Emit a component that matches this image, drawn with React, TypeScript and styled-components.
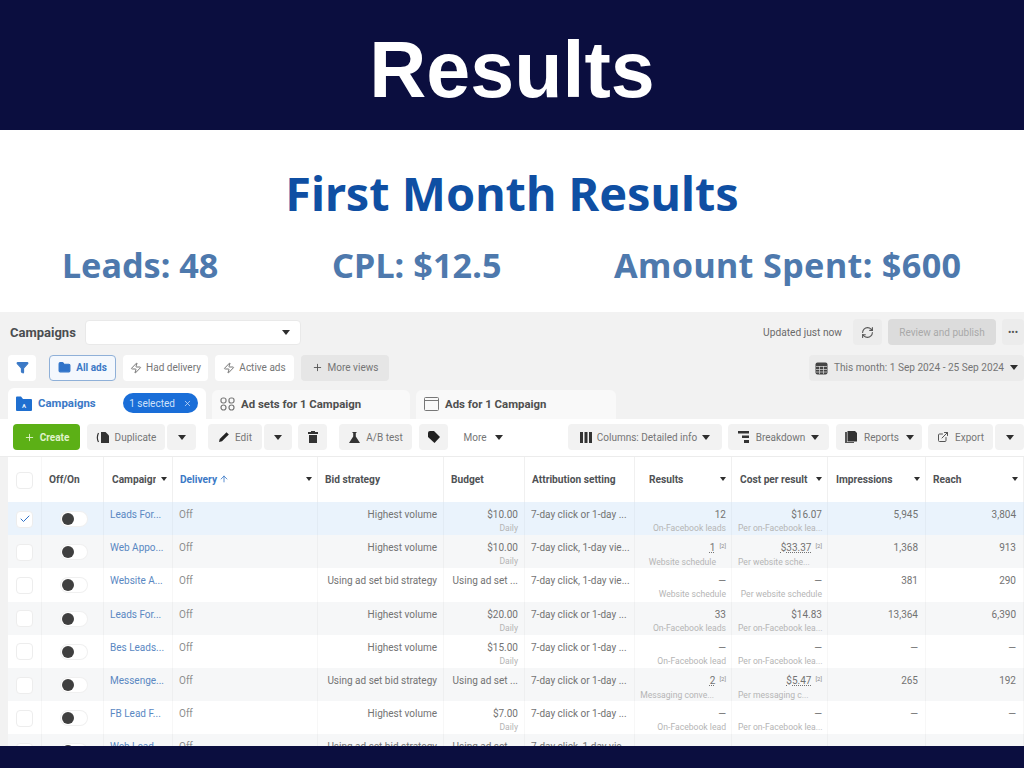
import React from "react";
import styled, { createGlobalStyle } from "styled-components";
import { Filter, Folder, Zap, Plus, X, ExternalLink, Check, ArrowUp, RefreshCw } from "lucide-react";

const Global = createGlobalStyle`
  html, body { margin: 0; padding: 0; background: #fff; }
  body { width: 1024px; height: 768px; overflow: hidden; font-family: "Roboto", "Liberation Sans", sans-serif; }
`;
const Page = styled.div`width:1024px;height:768px;display:flex;flex-direction:column;overflow:hidden;background:#0b0e3f;`;
const Banner = styled.header`height:130px;flex:none;display:flex;align-items:center;justify-content:center;background:#0b0e3f;`;
const Title = styled.h1`margin:0;color:#fff;font:700 79px/1 "Liberation Sans",sans-serif;position:relative;top:4px;`;
const Sheet = styled.main`height:616px;flex:none;background:#fff;display:flex;flex-direction:column;overflow:hidden;`;
const Heading = styled.h2`margin:0;padding-top:36px;height:87px;box-sizing:border-box;text-align:center;color:#0f4fa3;font:700 46.8px/54px "Noto Sans","Open Sans",sans-serif;`;
const Stats = styled.div`height:95px;flex:none;display:flex;align-items:flex-start;padding:24px 0 0 62px;box-sizing:border-box;color:#4e79ad;font:700 34.2px/48px "Noto Sans","Open Sans",sans-serif;`;
const Stat = styled.div<{ $w: number; $ls?: number }>`width:${p => p.$w}px;flex:none;white-space:nowrap;letter-spacing:${p => p.$ls ?? 0}px;`;
const Shot = styled.section`height:434px;flex:none;background:#f2f2f2;display:flex;flex-direction:column;overflow:hidden;color:#6f6f6f;font-size:10px;`;
const TopBar = styled.div`height:37px;flex:none;display:flex;align-items:center;padding:3px 0 0 10px;box-sizing:border-box;`;
const PageName = styled.div`font-weight:700;font-size:13px;color:#4a4d50;width:75px;`;
const Select = styled.div`width:216px;height:25px;background:#fff;border:1px solid #e9e9e9;border-radius:4px;box-sizing:border-box;display:flex;align-items:center;justify-content:flex-end;padding-right:10px;`;
const Caret = styled.i<{ $s?: number }>`display:inline-block;flex:none;width:0;height:0;border-left:${p => p.$s ?? 4.5}px solid transparent;border-right:${p => p.$s ?? 4.5}px solid transparent;border-top:${p => (p.$s ?? 4.5) + 0.5}px solid #2e2e2e;`;
const Spacer = styled.div`flex:1;`;
const Updated = styled.span`font-size:10.2px;color:#6a6a6a;margin-right:11px;`;
const Btn = styled.div<{ $w?: number; $bg?: string; $fg?: string; $gap?: number }>`height:26px;${p => p.$w ? `width:${p.$w}px;` : "padding:0 8px;"}flex:none;display:flex;align-items:center;justify-content:center;gap:${p => p.$gap ?? 5}px;background:${p => p.$bg ?? "#ececec"};color:${p => p.$fg ?? "#757575"};border-radius:4px;box-sizing:border-box;font-size:10px;white-space:nowrap;`;
const CreateBtn = styled(Btn)`font-weight:700;`;
const DateBtn = styled(Btn)`font-size:10.1px;`;
const ViewBar = styled.div`height:37px;flex:none;display:flex;align-items:center;gap:7px;padding:0 0 0 8px;box-sizing:border-box;`;
const ViewBtn = styled(Btn)<{ $on?: boolean }>`background:${p => p.$on ? "#f4f8fd" : "#fff"};border:${p => p.$on ? "1px solid #8fb0d8" : "0"};color:${p => p.$on ? "#3b79c6" : "#757575"};font-weight:${p => p.$on ? 700 : 400};`;
const FilterBtn = styled(ViewBtn)`margin-right:6px;`;
const TabBar = styled.div`height:33px;flex:none;display:flex;align-items:flex-end;gap:6px;padding-left:8px;`;
const Tab = styled.div<{ $w: number; $on?: boolean }>`width:${p => p.$w}px;height:${p => p.$on ? 31 : 29}px;background:${p => p.$on ? "#fff" : "#f9f9f9"};border-radius:6px 6px 0 0;display:flex;align-items:center;padding:0 8px 1px;box-sizing:border-box;font-weight:700;font-size:11.4px;color:${p => p.$on ? "#3b79c6" : "#4f4f4f"};gap:6px;white-space:nowrap;`;
const Pill = styled.div`margin-left:auto;height:20px;width:75px;flex:none;background:#1a6ed8;color:#cfe2fa;border-radius:10px;display:flex;align-items:center;justify-content:center;gap:8px;font-size:10px;font-weight:400;`;
const ActionBar = styled.div`height:38px;flex:none;background:#fff;display:flex;align-items:center;padding:0 0 1px 13px;box-sizing:border-box;border-bottom:1px solid #ececec;`;
const Gap = styled.div<{ $w: number }>`width:${p => p.$w}px;flex:none;`;
const Table = styled.div`flex:1;min-height:0;margin-left:8px;background:#fff;overflow:hidden;`;
const Grid = "34px 62px 69px 145px 126px 81px 110px 97px 96px 98px 98px";
const HeadRow = styled.div`height:45px;display:grid;grid-template-columns:${Grid};background:#fff;`;
const HCell = styled.div<{ $c?: string; $pl?: number }>`display:flex;align-items:center;padding:0 5px 1px ${p => p.$pl ?? 7}px;box-sizing:border-box;border-right:1px solid #f0f0f0;font-weight:700;font-size:10.2px;color:${p => p.$c ?? "#4f5255"};justify-content:space-between;white-space:nowrap;overflow:hidden;`;
const HLabel = styled.span<{ $w?: number }>`display:inline-flex;align-items:center;gap:2px;overflow:hidden;${p => p.$w ? `max-width:${p.$w}px;` : ""}`;
const Row = styled.div<{ $t: string }>`height:33.2px;display:grid;grid-template-columns:${Grid};background:${p => p.$t};`;
const Cell = styled.div<{ $r?: boolean; $pr?: number }>`padding:6px ${p => p.$pr ?? 6}px 0 6px;box-sizing:border-box;border-right:1px solid rgba(0,0,0,.03);display:flex;flex-direction:column;align-items:${p => p.$r ? "flex-end" : "flex-start"};line-height:13px;color:#737373;white-space:nowrap;overflow:hidden;`;
const Center = styled.div`display:flex;align-items:center;justify-content:center;border-right:1px solid rgba(0,0,0,.03);padding-top:1px;`;
const Box = styled.div`width:17px;height:17px;background:#fff;border:1px solid #ededed;border-radius:4px;box-sizing:border-box;display:flex;align-items:center;justify-content:center;`;
const Toggle = styled.div`width:26px;height:14px;border-radius:7px;background:#fff;box-shadow:0 0 0 1px #f0f0f0;position:relative;left:1px;&::before{content:"";position:absolute;left:1px;top:1px;width:12px;height:12px;border-radius:50%;background:#3f3f3f;}`;
const Link = styled.span`color:#5a88c2;`;
const Off = styled.span`color:#8e8e8e;`;
const Sub = styled.span<{ $start?: boolean; $mr?: number }>`font-size:8.6px;line-height:13px;margin-top:1px;color:#b5b5b5;${p => p.$start ? "align-self:flex-start;" : ""}margin-right:${p => p.$mr ?? 0}px;`;
const Value = styled.span`display:block;`;
const U = styled.span`text-decoration:underline;text-decoration-style:dotted;`;
const Note = styled.span`font-size:6px;margin-left:4px;color:#888;position:relative;top:-3px;`;

const Dup = () => <svg width="14" height="13" viewBox="0 0 14 13"><path d="M2.5 2C1.2 4.5 1.2 8.5 2.5 11" fill="none" stroke="#333" strokeWidth="1.2"/><path d="M5 1h4.5L13 4.5V12H5z" fill="#333"/></svg>;
const Pen = () => <svg width="12" height="12" viewBox="0 0 12 12"><path d="M1 11l.7-3L8.5 1.2l2.3 2.3L4 10.3z" fill="#222"/></svg>;
const Bin = () => <svg width="12" height="14" viewBox="0 0 12 14"><path d="M4 1h4v1h3v2H1V2h3zM2 5h8v8H2z" fill="#333"/></svg>;
const Flask = () => <svg width="13" height="13" viewBox="0 0 13 13"><path d="M4.5 1h4v1h-.7v3.5L12 12H1l4.2-6.5V2h-.7z" fill="#333"/></svg>;
const Label = () => <svg width="14" height="14" viewBox="0 0 14 14"><path d="M1 3a2 2 0 012-2h4l6 6-5.5 6L1 7z" fill="#222"/></svg>;
const Bars = () => <svg width="12" height="11" viewBox="0 0 12 11"><path d="M0 0h3v11H0zM4.5 0h3v11h-3zM9 0h3v11H9z" fill="#333"/></svg>;
const Stack = () => <svg width="12" height="12" viewBox="0 0 12 12"><path d="M0 0h11v2.5H0zM4 4.5h7V7H4zM6 9h5v3H6z" fill="#333"/></svg>;
const Docs = () => <svg width="13" height="13" viewBox="0 0 13 13"><path d="M1 1h2v10h7v1H1z" fill="#555"/><path d="M3.5 0H11l2 2v8.5H3.5z" fill="#333"/></svg>;
const Cal = () => <svg width="13" height="14" viewBox="0 0 13 14"><rect x=".5" y="1.5" width="12" height="12" rx="2" fill="#444"/><path d="M1 5.5h11M1 8.5h11M1 11h11M4.5 5v8M8.5 5v8" stroke="#ddd" strokeWidth=".7"/></svg>;
const CampaignIcon = () => <svg width="16" height="15" viewBox="0 0 16 15"><path d="M0 1.5A1 1 0 011 .5h4l2 2.5h8a1 1 0 011 1V14a1 1 0 01-1 1H1a1 1 0 01-1-1z" fill="#1f6fd0"/><text x="8" y="12" fontSize="6" fontWeight="700" fill="#e6f0fb" textAnchor="middle" fontFamily="Roboto, sans-serif">A</text></svg>;
const AdSetIcon = () => <svg width="15" height="14" viewBox="0 0 15 14" fill="none" stroke="#777" strokeWidth="1.2"><rect x="1" y="1" width="5" height="5" rx="2"/><rect x="9" y="1" width="5" height="5" rx="2"/><rect x="1" y="8" width="5" height="5" rx="2.5"/><rect x="9" y="8" width="5" height="5" rx="2.5"/></svg>;
const AdIcon = () => <svg width="15" height="14" viewBox="0 0 15 14" fill="none" stroke="#777" strokeWidth="1"><rect x=".5" y=".5" width="14" height="13" rx="1"/><path d="M.5 3.5h14"/></svg>;

type R = { name: string; bid: string; bud: string; daily: boolean; attr: string; res: React.ReactNode; rs: string; rm?: number; cost: React.ReactNode; cs: string; imp: string; reach: string };
const click = "7-day click or 1-day ...";
const view = "7-day click, 1-day vie...";
const noted = (v: string) => <Value><U>{v}</U><Note>[2]</Note></Value>;
const rows: R[] = [
  { name: "Leads For...", bid: "Highest volume", bud: "$10.00", daily: true, attr: click, res: "12", rs: "On-Facebook leads", cost: "$16.07", cs: "Per on-Facebook lea...", imp: "5,945", reach: "3,804" },
  { name: "Web Appo...", bid: "Highest volume", bud: "$10.00", daily: true, attr: view, res: noted("1"), rs: "Website schedule", rm: 10, cost: noted("$33.37"), cs: "Per website sche...", imp: "1,368", reach: "913" },
  { name: "Website A...", bid: "Using ad set bid strategy", bud: "Using ad set ...", daily: false, attr: view, res: "—", rs: "Website schedule", cost: "—", cs: "Per website schedule", imp: "381", reach: "290" },
  { name: "Leads For...", bid: "Highest volume", bud: "$20.00", daily: true, attr: click, res: "33", rs: "On-Facebook leads", cost: "$14.83", cs: "Per on-Facebook lea...", imp: "13,364", reach: "6,390" },
  { name: "Bes Leads...", bid: "Highest volume", bud: "$15.00", daily: true, attr: click, res: "—", rs: "On-Facebook lead", cost: "—", cs: "Per on-Facebook lea...", imp: "—", reach: "—" },
  { name: "Messenge...", bid: "Using ad set bid strategy", bud: "Using ad set ...", daily: false, attr: click, res: noted("2"), rs: "Messaging conve...", rm: 12, cost: noted("$5.47"), cs: "Per messaging c...", imp: "265", reach: "192" },
  { name: "FB Lead F...", bid: "Highest volume", bud: "$7.00", daily: true, attr: click, res: "—", rs: "On-Facebook lead", cost: "—", cs: "Per on-Facebook lea...", imp: "—", reach: "—" },
  { name: "Web Lead...", bid: "Using ad set bid strategy", bud: "Using ad set ...", daily: false, attr: view, res: "—", rs: "", cost: "—", cs: "", imp: "—", reach: "—" },
];
const tint = (i: number) => (i === 0 ? "#eaf3fc" : i % 2 === 1 ? "#f6f7f8" : "#fff");

export default function App() {
  return (
    <Page>
      <Global />
      <Banner><Title>Results</Title></Banner>
      <Sheet>
        <Heading>First Month Results</Heading>
        <Stats>
          <Stat $w={270}>Leads: 48</Stat>
          <Stat $w={282} $ls={0.1}>CPL: $12.5</Stat>
          <Stat $w={360} $ls={0.35}>Amount Spent: $600</Stat>
        </Stats>
        <Shot>
          <TopBar>
            <PageName>Campaigns</PageName>
            <Select><Caret /></Select>
            <Spacer />
            <Updated>Updated just now</Updated>
            <Btn $w={29}><RefreshCw size={13} color="#555" /></Btn>
            <Gap $w={6} />
            <Btn $w={108} $bg="#dcdcdc" $fg="#a9a9a9">Review and publish</Btn>
            <Gap $w={6} />
            <Btn $w={22} $fg="#555">•••</Btn>
          </TopBar>
          <ViewBar>
            <FilterBtn $w={28}><Filter size={13} color="#3b79c6" fill="#3b79c6" /></FilterBtn>
            <ViewBtn $w={67} $on><Folder size={13} color="#2f73c9" fill="#2f73c9" />All ads</ViewBtn>
            <ViewBtn $w={85} $gap={4}><Zap size={12} color="#777" />Had delivery</ViewBtn>
            <ViewBtn $w={79} $gap={4}><Zap size={12} color="#777" />Active ads</ViewBtn>
            <Btn $w={88} $bg="#e6e6e6"><Plus size={11} color="#555" />More views</Btn>
            <Spacer />
            <DateBtn $w={215} $bg="#ebebeb" $gap={6}><Cal />This month: 1 Sep 2024 - 25 Sep 2024<Caret /></DateBtn>
          </ViewBar>
          <TabBar>
            <Tab $w={198} $on><CampaignIcon />Campaigns<Pill>1 selected<X size={9} /></Pill></Tab>
            <Tab $w={198}><AdSetIcon />Ad sets for 1 Campaign</Tab>
            <Tab $w={200}><AdIcon />Ads for 1 Campaign</Tab>
          </TabBar>
          <ActionBar>
            <CreateBtn $w={67} $bg="#5cb016" $fg="#e0f3cc"><Plus size={11} />Create</CreateBtn>
            <Gap $w={7} />
            <Btn $w={78} $bg="#f2f2f2"><Dup />Duplicate</Btn>
            <Gap $w={2} />
            <Btn $w={29} $bg="#f2f2f2"><Caret /></Btn>
            <Gap $w={12} />
            <Btn $w={54} $bg="#f2f2f2"><Pen />Edit</Btn>
            <Gap $w={2} />
            <Btn $w={28} $bg="#f2f2f2"><Caret /></Btn>
            <Gap $w={6} />
            <Btn $w={29} $bg="#f2f2f2"><Bin /></Btn>
            <Gap $w={12} />
            <Btn $w={73} $bg="#f2f2f2"><Flask />A/B test</Btn>
            <Gap $w={7} />
            <Btn $w={29} $bg="#f2f2f2"><Label /></Btn>
            <Gap $w={9} />
            <Btn $w={52} $bg="#fff" $gap={8}>More<Caret /></Btn>
            <Gap $w={59} />
            <Btn $w={154} $bg="#f2f2f2" $gap={5}><Bars />Columns: Detailed info<Caret /></Btn>
            <Gap $w={6} />
            <Btn $w={101} $bg="#f2f2f2" $gap={6}><Stack />Breakdown<Caret /></Btn>
            <Gap $w={7} />
            <Btn $w={86} $bg="#f2f2f2" $gap={7}><Docs />Reports<Caret /></Btn>
            <Gap $w={6} />
            <Btn $w={65} $bg="#f2f2f2" $gap={6}><ExternalLink size={12} color="#555" />Export</Btn>
            <Gap $w={2} />
            <Btn $w={29} $bg="#f2f2f2"><Caret /></Btn>
          </ActionBar>
          <Table>
            <HeadRow>
              <Center><Box /></Center>
              <HCell>Off/On</HCell>
              <HCell $pl={8}><HLabel $w={44}>Campaign</HLabel><Caret $s={3.5} /></HCell>
              <HCell $c="#3b79c6"><HLabel>Delivery<ArrowUp size={10} /></HLabel><Caret $s={3.5} /></HCell>
              <HCell>Bid strategy</HCell>
              <HCell>Budget</HCell>
              <HCell>Attribution setting</HCell>
              <HCell $pl={14}>Results<Caret $s={3.5} /></HCell>
              <HCell $pl={8}>Cost per result<Caret $s={3.5} /></HCell>
              <HCell $pl={8}>Impressions<Caret $s={3.5} /></HCell>
              <HCell>Reach<Caret $s={3.5} /></HCell>
            </HeadRow>
            {rows.map((r, i) => (
              <Row key={i} $t={tint(i)}>
                <Center><Box>{i === 0 && <Check size={12} color="#2f73c9" />}</Box></Center>
                <Center><Toggle /></Center>
                <Cell><Link>{r.name}</Link></Cell>
                <Cell><Off>Off</Off></Cell>
                <Cell $r>{r.bid}</Cell>
                <Cell $r>{r.bud}{r.daily && <Sub>Daily</Sub>}</Cell>
                <Cell>{r.attr}</Cell>
                <Cell $r $pr={5}>{r.res}{r.rs && <Sub $mr={r.rm}>{r.rs}</Sub>}</Cell>
                <Cell $r $pr={5}>{r.cost}{r.cs && <Sub $start={r.cs !== "Per website schedule"}>{r.cs}</Sub>}</Cell>
                <Cell $r $pr={7}>{r.imp}</Cell>
                <Cell $r $pr={7}>{r.reach}</Cell>
              </Row>
            ))}
          </Table>
        </Shot>
      </Sheet>
    </Page>
  );
}
